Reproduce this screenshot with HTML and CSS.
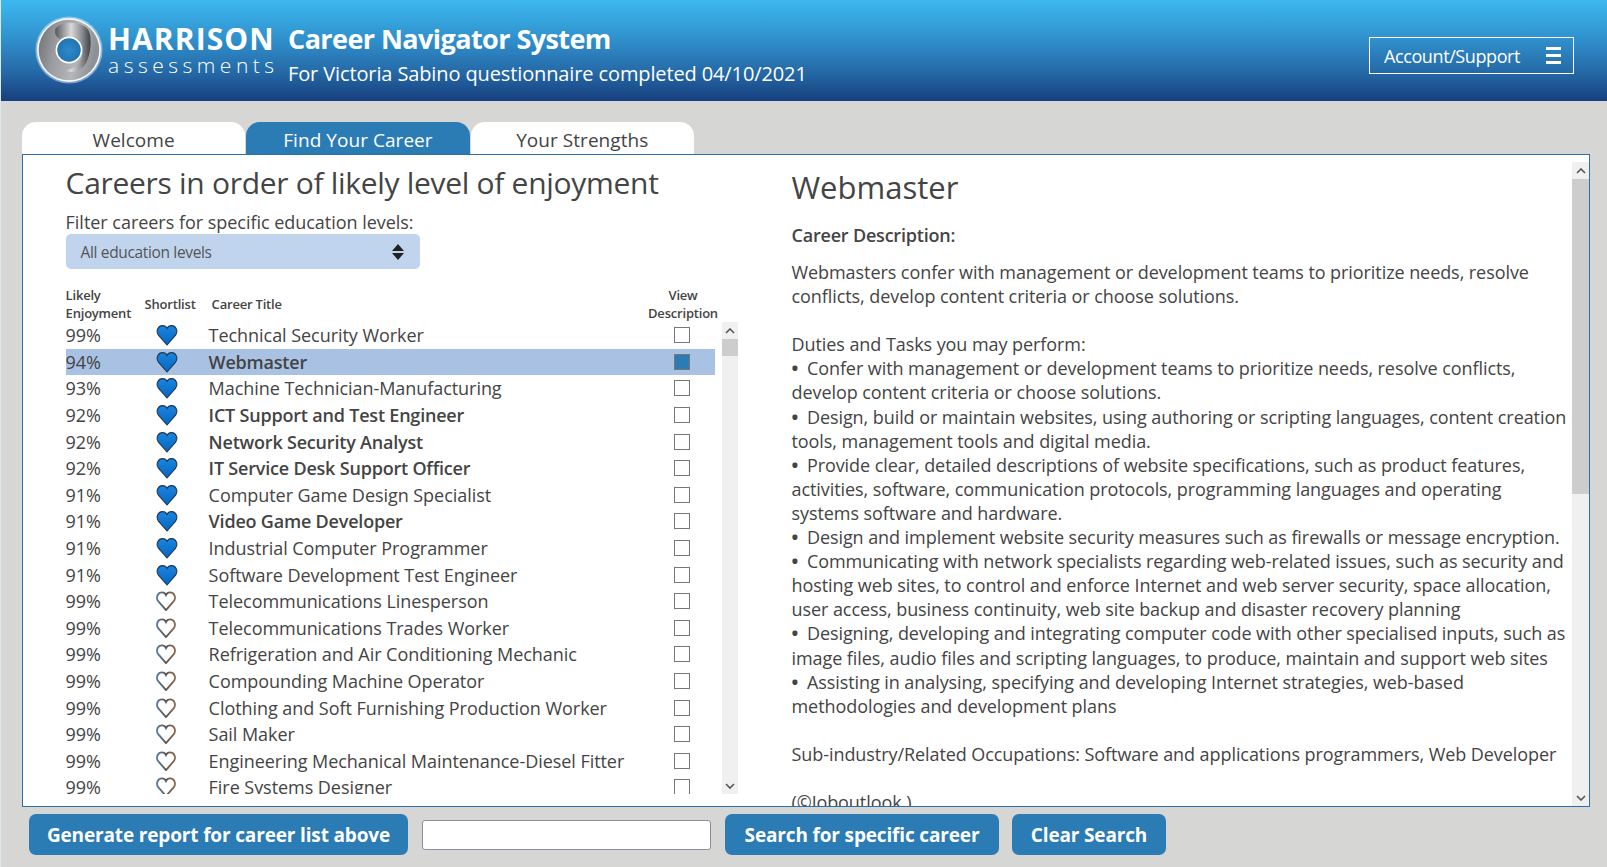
FILE: index.html
```html
<!DOCTYPE html>
<html lang="en">
<head>
<meta charset="utf-8">
<title>Career Navigator System</title>
<link rel="stylesheet" href="styles.css">
</head>
<body>
<svg class="defs" width="0" height="0" aria-hidden="true">
  <defs>
    <linearGradient id="ringGrad" x1="0" y1="0" x2="1" y2="0.2">
      <stop offset="0" stop-color="#6d7073"/><stop offset="0.35" stop-color="#9a9c9f"/><stop offset="0.7" stop-color="#b4b6b8"/><stop offset="1" stop-color="#8d9094"/>
    </linearGradient>
    <linearGradient id="swirlGrad" x1="0" y1="0" x2="1" y2="0">
      <stop offset="0" stop-color="#55585b"/><stop offset="0.45" stop-color="#d8d9da"/><stop offset="0.75" stop-color="#8b8d90"/><stop offset="1" stop-color="#3f4144"/>
    </linearGradient>
    <radialGradient id="holeGrad" cx="0.5" cy="0.5" r="0.6">
      <stop offset="0" stop-color="#2f8bc8"/><stop offset="1" stop-color="#1f6fae"/>
    </radialGradient>
    <linearGradient id="heartFill" x1="0" y1="0" x2="0" y2="1">
      <stop offset="0" stop-color="#1a86e0"/><stop offset="1" stop-color="#0565bf"/>
    </linearGradient>
    <linearGradient id="heartEdge" x1="0" y1="0" x2="1" y2="0">
      <stop offset="0" stop-color="#5a7a9c"/><stop offset="0.5" stop-color="#5c5654"/><stop offset="1" stop-color="#8f6a4c"/>
    </linearGradient>
    <symbol id="heart" viewBox="0 0 22 22">
      <path d="M11 21 L2.4 11.2 C-0.6 6.6 2.2 1.6 6.6 1.6 C8.8 1.6 10.3 2.9 11 4.4 C11.7 2.9 13.2 1.6 15.4 1.6 C19.8 1.6 22.6 6.6 19.6 11.2 Z"/>
    </symbol>
  </defs>
</svg>

<header class="top">
  <div class="brand">
    <svg class="logo" viewBox="0 0 66 66" width="68" height="68" role="img" aria-label="Harrison logo">
      <circle cx="33" cy="33" r="32.6" fill="#dfeaf4" opacity="0.5"/>
      <circle cx="33" cy="33" r="31" fill="#f4f6f8"/>
      <circle cx="33" cy="33" r="29.4" fill="url(#ringGrad)"/>
      <path d="M20 12 C28 3 48 6 52 14 C56 22 54 44 46 50 C40 55 32 56 28 52 C38 53 46 46 46 36 C46 26 38 20 28 22 C22 24 18 18 20 12 Z" fill="url(#swirlGrad)"/>
      <circle cx="33" cy="33" r="13" fill="#ffffff"/>
      <circle cx="33" cy="33" r="11.4" fill="url(#holeGrad)"/>
    </svg>
    <div class="wordmark">
      <div class="wm-main">HARRISON</div>
      <div class="wm-sub">assessments</div>
    </div>
  </div>
  <div class="titles">
    <div class="app-title">Career Navigator System</div>
    <div class="app-sub">For Victoria Sabino questionnaire completed 04/10/2021</div>
  </div>
  <button class="account" type="button">
    <span>Account/Support</span>
    <span class="burger"><i></i><i></i><i></i></span>
  </button>
</header>

<nav class="tabs">
  <div class="tab">Welcome</div>
  <div class="tab active">Find Your Career</div>
  <div class="tab">Your Strengths</div>
</nav>

<main class="panel">
  <section class="left">
    <h1 class="list-title">Careers in order of likely level of enjoyment</h1>
    <div class="filter-label">Filter careers for specific education levels:</div>
    <div class="select">
      <span>All education levels</span>
      <svg class="updown" viewBox="0 0 14 18" width="14" height="18" aria-hidden="true"><path d="M7 1 L13 8 H1 Z M7 17 L13 10 H1 Z" fill="#222"/></svg>
    </div>
    <div class="thead">
      <div class="th th-enjoy">Likely<br>Enjoyment</div>
      <div class="th th-short">Shortlist</div>
      <div class="th th-title">Career Title</div>
      <div class="th th-view">View<br>Description</div>
    </div>
    <div class="list-wrap">
      <div class="rows">
        <div class="row"><span>99%</span><svg class="heart on"><use href="#heart"/></svg><span class="t">Technical Security Worker</span><i class="cb"></i></div>
        <div class="row sel"><span>94%</span><svg class="heart on"><use href="#heart"/></svg><b class="t">Webmaster</b><i class="cb checked"></i></div>
        <div class="row"><span>93%</span><svg class="heart on"><use href="#heart"/></svg><span class="t">Machine Technician-Manufacturing</span><i class="cb"></i></div>
        <div class="row"><span>92%</span><svg class="heart on"><use href="#heart"/></svg><b class="t">ICT Support and Test Engineer</b><i class="cb"></i></div>
        <div class="row"><span>92%</span><svg class="heart on"><use href="#heart"/></svg><b class="t">Network Security Analyst</b><i class="cb"></i></div>
        <div class="row"><span>92%</span><svg class="heart on"><use href="#heart"/></svg><b class="t">IT Service Desk Support Officer</b><i class="cb"></i></div>
        <div class="row"><span>91%</span><svg class="heart on"><use href="#heart"/></svg><span class="t">Computer Game Design Specialist</span><i class="cb"></i></div>
        <div class="row"><span>91%</span><svg class="heart on"><use href="#heart"/></svg><b class="t">Video Game Developer</b><i class="cb"></i></div>
        <div class="row"><span>91%</span><svg class="heart on"><use href="#heart"/></svg><span class="t">Industrial Computer Programmer</span><i class="cb"></i></div>
        <div class="row"><span>91%</span><svg class="heart on"><use href="#heart"/></svg><span class="t">Software Development Test Engineer</span><i class="cb"></i></div>
        <div class="row"><span>99%</span><svg class="heart"><use href="#heart"/></svg><span class="t">Telecommunications Linesperson</span><i class="cb"></i></div>
        <div class="row"><span>99%</span><svg class="heart"><use href="#heart"/></svg><span class="t">Telecommunications Trades Worker</span><i class="cb"></i></div>
        <div class="row"><span>99%</span><svg class="heart"><use href="#heart"/></svg><span class="t">Refrigeration and Air Conditioning Mechanic</span><i class="cb"></i></div>
        <div class="row"><span>99%</span><svg class="heart"><use href="#heart"/></svg><span class="t">Compounding Machine Operator</span><i class="cb"></i></div>
        <div class="row"><span>99%</span><svg class="heart"><use href="#heart"/></svg><span class="t">Clothing and Soft Furnishing Production Worker</span><i class="cb"></i></div>
        <div class="row"><span>99%</span><svg class="heart"><use href="#heart"/></svg><span class="t">Sail Maker</span><i class="cb"></i></div>
        <div class="row"><span>99%</span><svg class="heart"><use href="#heart"/></svg><span class="t">Engineering Mechanical Maintenance-Diesel Fitter</span><i class="cb"></i></div>
        <div class="row"><span>99%</span><svg class="heart"><use href="#heart"/></svg><span class="t">Fire Systems Designer</span><i class="cb"></i></div>
      </div>
      <div class="sbar sbar-list">
        <div class="sb-btn"><svg viewBox="0 0 10 6" width="10" height="6"><path d="M1 5 L5 1 L9 5" class="chev"/></svg></div>
        <div class="sb-thumb"></div>
        <div class="sb-track"></div>
        <div class="sb-btn"><svg viewBox="0 0 10 6" width="10" height="6"><path d="M1 1 L5 5 L9 1" class="chev"/></svg></div>
      </div>
    </div>
  </section>

  <section class="right">
    <h2 class="career-name">Webmaster</h2>
    <div class="desc-head">Career Description:</div>
    <p class="desc">Webmasters confer with management or development teams to prioritize needs, resolve<br>conflicts, develop content criteria or choose solutions.<br><br>Duties and Tasks you may perform:<br><span class="blt">•</span> Confer with management or development teams to prioritize needs, resolve conflicts,<br>develop content criteria or choose solutions.<br><span class="blt">•</span> Design, build or maintain websites, using authoring or scripting languages, content creation<br>tools, management tools and digital media.<br><span class="blt">•</span> Provide clear, detailed descriptions of website specifications, such as product features,<br>activities, software, communication protocols, programming languages and operating<br>systems software and hardware.<br><span class="blt">•</span> Design and implement website security measures such as firewalls or message encryption.<br><span class="blt">•</span> Communicating with network specialists regarding web-related issues, such as security and<br>hosting web sites, to control and enforce Internet and web server security, space allocation,<br>user access, business continuity, web site backup and disaster recovery planning<br><span class="blt">•</span> Designing, developing and integrating computer code with other specialised inputs, such as<br>image files, audio files and scripting languages, to produce, maintain and support web sites<br><span class="blt">•</span> Assisting in analysing, specifying and developing Internet strategies, web-based<br>methodologies and development plans<br><br>Sub-industry/Related Occupations: Software and applications programmers, Web Developer<br><br>(©Joboutlook )</p>
  </section>

  <div class="sbar sbar-main">
    <div class="sb-btn"><svg viewBox="0 0 10 6" width="10" height="6"><path d="M1 5 L5 1 L9 5" class="chev"/></svg></div>
    <div class="sb-thumb"></div>
    <div class="sb-track"></div>
    <div class="sb-btn"><svg viewBox="0 0 10 6" width="10" height="6"><path d="M1 1 L5 5 L9 1" class="chev"/></svg></div>
  </div>
</main>

<footer class="actions">
  <button class="btn btn-gen" type="button">Generate report for career list above</button>
  <input class="search" type="text" aria-label="Search">
  <button class="btn btn-search" type="button">Search for specific career</button>
  <button class="btn btn-clear" type="button">Clear Search</button>
</footer>
</body>
</html>
```
FILE: styles.css
```css
* { box-sizing: border-box; }
html, body { margin: 0; height: 867px; overflow: hidden; }
body {
  background: #d6d6d5;
  color: #444;
  font-family: "Open Sans", "Noto Sans", sans-serif;
  border-left: 1px solid #dfe7f0;
  display: flex;
  flex-direction: column;
}
.defs { position: absolute; }

/* header */
.top {
  height: 101px;
  flex: none;
  display: flex;
  align-items: flex-start;
  color: #fff;
  background: linear-gradient(#3cb9f0 0%, #2f8fcb 40%, #2568a6 72%, #173f7e 100%);
}
.brand { display: flex; margin: 16px 0 0 34px; }
.logo { flex: none; }
.wordmark { margin: 7px 0 0 5px; width: 166px; }
.wm-main { font-size: 30px; line-height: 32px; font-weight: 700; letter-spacing: 1.1px; white-space: nowrap; }
.wm-sub { font-size: 21px; line-height: 20px; font-weight: 300; letter-spacing: 4.5px; white-space: nowrap; }
.titles { margin: 20px 0 0 14px; }
.app-title { font-size: 27px; line-height: 38px; font-weight: 700; letter-spacing: -0.57px; white-space: nowrap; }
.app-sub { font-size: 20px; line-height: 28px; margin-top: 2px; letter-spacing: -0.12px; white-space: nowrap; }
.account {
  margin: 37px 33px 0 auto;
  width: 205px;
  height: 37px;
  border: 1px solid #fff;
  background: transparent;
  color: #fff;
  font: 18px/1 "Open Sans", sans-serif;
  letter-spacing: -0.4px;
  display: flex;
  align-items: center;
  justify-content: space-between;
  padding: 0 12px 0 14px;
}
.burger { display: flex; flex-direction: column; gap: 4px; width: 15px; }
.burger i { display: block; height: 3px; background: #fff; }

/* tabs */
.tabs { display: flex; gap: 1px; margin: 21px 0 0 21px; height: 32px; flex: none; }
.tab {
  width: 223.3px;
  background: #fff;
  border-radius: 14px 14px 0 0;
  text-align: center;
  font-size: 19px;
  line-height: 36px;
  letter-spacing: 0.05px;
  color: #444;
}
.tab.active { background: #2b7bb5; color: #fff; }

/* panel */
.panel {
  width: 1568px;
  height: 653px;
  flex: none;
  margin-left: 21px;
  background: #fff;
  border: 1px solid #2f6fa8;
  display: flex;
  overflow: hidden;
}
.left { width: 716px; flex: none; padding: 8px 0 0 42.6px; }
.list-title { margin: 0; font-size: 30px; line-height: 40px; font-weight: 400; letter-spacing: -0.3px; white-space: nowrap; }
.filter-label { margin-top: 7px; font-size: 18px; line-height: 24px; letter-spacing: -0.03px; }
.select {
  width: 354.4px;
  height: 35px;
  background: #c0d4ee;
  border-radius: 5px;
  display: flex;
  align-items: center;
  justify-content: space-between;
  padding: 0 15px;
  font-size: 15.5px;
  letter-spacing: -0.35px;
  color: #555;
}
.thead { display: flex; margin-top: 17px; height: 36px; width: 652px; align-items: center; }
.th { font-size: 13px; line-height: 18.5px; font-weight: 600; color: #444; letter-spacing: -0.2px; }
.th-enjoy { width: 79px; }
.th-short { width: 67px; }
.th-title { flex: 1; }
.th-view { width: 74px; text-align: center; transform: translateX(2.4px); }

.list-wrap { display: flex; height: 472px; overflow: hidden; }
.rows { width: 649.4px; flex: none; }
.row {
  display: grid;
  grid-template-columns: 90px 22px 1fr 16px;
  align-items: center;
  height: 26.6px;
  padding-right: 25px;
  font-size: 18px;
  letter-spacing: -0.05px;
  color: #444;
}
.row.sel { background: #a9c2e3; }
.t { padding-left: 31px; white-space: nowrap; }
b.t { font-weight: 600; letter-spacing: -0.2px; }
.heart { width: 20px; height: 20px; fill: #fff; stroke: url(#heartEdge); stroke-width: 2; }
.heart.on { width: 22px; height: 22px; fill: url(#heartFill); stroke: #24384e; stroke-width: 1.1; }
.cb { display: block; width: 16px; height: 16px; border: 1px solid #777; background: #fff; }
.cb.checked { background: #2b7bb5; }

/* scrollbars */
.sbar { flex: none; display: flex; flex-direction: column; background: #f0f0f0; }
.sbar-list { width: 16px; margin-left: 7px; }
.sbar-main { width: 17px; margin: 7px 0 0 auto; }
.sb-btn { height: 17px; flex: none; display: flex; align-items: center; justify-content: center; }
.sb-thumb { flex: none; background: #cdcdcd; }
.sbar-list .sb-thumb { height: 17px; }
.sbar-main .sb-thumb { height: 315px; }
.sb-track { flex: 1; }
.chev { fill: none; stroke: #555; stroke-width: 1.6; }

/* right */
.right { flex: 1; min-width: 0; padding: 8px 0 0 52.5px; overflow: hidden; }
.career-name { margin: 0; font-size: 31px; line-height: 48px; font-weight: 400; }
.desc-head { margin-top: 12px; font-size: 18px; line-height: 24px; font-weight: 600; letter-spacing: -0.2px; }
.desc { margin: 13px 0 0; font-size: 18px; line-height: 24.1px; letter-spacing: -0.07px; white-space: nowrap; }
.blt { font-weight: 700; letter-spacing: 4px; }

/* footer */
.actions { display: flex; align-items: center; margin: 7px 0 0 28px; height: 41px; flex: none; }
.btn {
  height: 41px;
  border: 0;
  border-radius: 7px;
  background: #2b7bb5;
  color: #fff;
  font: 700 19px/1 "Open Sans", sans-serif;
  letter-spacing: -0.15px;
  padding: 2px 0 0;
  flex: none;
}
.btn-gen { width: 379px; }
.btn-search { width: 274px; }
.btn-clear { width: 154px; margin-left: 13px; }
.search {
  width: 289px;
  height: 30px;
  margin: 0 14px;
  border: 1px solid #8e8e9e;
  border-radius: 3px;
  background: #fff;
  flex: none;
}
```
